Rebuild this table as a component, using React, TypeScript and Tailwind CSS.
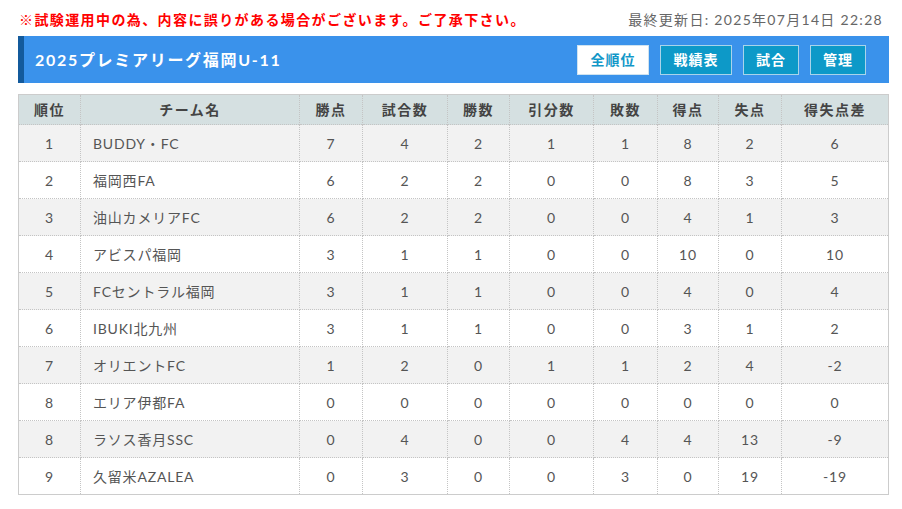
const teams = [
  ["1", "BUDDY・FC", "7", "4", "2", "1", "1", "8", "2", "6"],
  ["2", "福岡西FA", "6", "2", "2", "0", "0", "8", "3", "5"],
  ["3", "油山カメリアFC", "6", "2", "2", "0", "0", "4", "1", "3"],
  ["4", "アビスパ福岡", "3", "1", "1", "0", "0", "10", "0", "10"],
  ["5", "FCセントラル福岡", "3", "1", "1", "0", "0", "4", "0", "4"],
  ["6", "IBUKI北九州", "3", "1", "1", "0", "0", "3", "1", "2"],
  ["7", "オリエントFC", "1", "2", "0", "1", "1", "2", "4", "-2"],
  ["8", "エリア伊都FA", "0", "0", "0", "0", "0", "0", "0", "0"],
  ["8", "ラソス香月SSC", "0", "4", "0", "0", "4", "4", "13", "-9"],
  ["9", "久留米AZALEA", "0", "3", "0", "0", "3", "0", "19", "-19"],
]

const heads = ["順位", "チーム名", "勝点", "試合数", "勝数", "引分数", "敗数", "得点", "失点", "得失点差"]
const widths = [62, 219, 63, 85, 62, 84, 64, 61, 63, 107]

function App() {
  return (
    <div className="w-[902px] h-[509px] bg-white font-['Lato','Noto_Sans_CJK_JP',sans-serif] text-[#555]">
      <div className="px-[18px] pt-[10px]">
        <div className="flex justify-between items-center h-[18px] w-[871px] pl-[1px] pr-[6px]">
          <p className="text-[14px] font-bold text-[#f00] tracking-[1.4px]">※試験運用中の為、内容に誤りがある場合がございます。ご了承下さい。</p>
          <p className="text-[14px] text-[#666] tracking-[1.3px]">最終更新日: 2025年07月14日 22:28</p>
        </div>
        <div className="mt-[8px] w-[871px] h-[47px] bg-[#3a92eb] border-l-[6px] border-[#135a9c] flex items-center justify-between pl-[11px] pr-[23px]">
          <h1 className="text-white font-bold text-[16px] tracking-[1.7px]">2025プレミアリーグ福岡U-11</h1>
          <div className="flex gap-[11px]">
            <button className="h-[30px] w-[72px] bg-white text-[#1297c8] border border-[#cfe3f0] font-bold text-[14px] tracking-[1px]">全順位</button>
            <button className="h-[30px] w-[72px] bg-[#0d99c8] text-white border border-[#a9d4ea] font-bold text-[14px] tracking-[1px]">戦績表</button>
            <button className="h-[30px] w-[56px] bg-[#0d99c8] text-white border border-[#a9d4ea] font-bold text-[14px] tracking-[1px]">試合</button>
            <button className="h-[30px] w-[56px] bg-[#0d99c8] text-white border border-[#a9d4ea] font-bold text-[14px] tracking-[1px]">管理</button>
          </div>
        </div>
        <table className="mt-[11px] w-[871px] table-fixed border-collapse border border-[#ccc] text-[14px]">
          <colgroup>
            {widths.map((w, i) => (
              <col key={i} style={{ width: w }} />
            ))}
          </colgroup>
          <thead>
            <tr className="h-[30px] bg-[#d5e0e1]">
              {heads.map((h) => (
                <th key={h} className="font-bold text-[#444] border-x border-dotted border-[#c4c4c4] text-center tracking-[1.5px]">{h}</th>
              ))}
            </tr>
          </thead>
          <tbody>
            {teams.map((r, i) => (
              <tr key={i} className={i % 2 === 0 ? "h-[37px] bg-[#f2f2f2]" : "h-[37px] bg-white"}>
                {r.map((c, j) => (
                  <td
                    key={j}
                    className={
                      j === 1
                        ? "text-left pl-[12px] border border-dotted border-[#c4c4c4] tracking-[0.8px]"
                        : "text-center border border-dotted border-[#c4c4c4] tracking-[0.8px]"
                    }
                  >
                    {c}
                  </td>
                ))}
              </tr>
            ))}
          </tbody>
        </table>
      </div>
    </div>
  )
}

export default App
